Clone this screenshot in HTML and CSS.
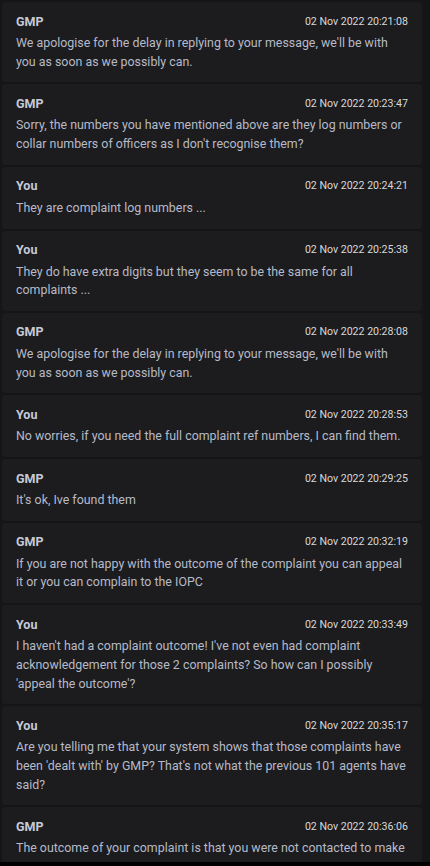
FILE: index.html
```html
<!DOCTYPE html>
<html lang="en">
<head>
    <meta charset="UTF-8">
    <meta name="viewport" content="width=device-width, initial-scale=1.0">
    <title>Messages - GMP</title>
    <link rel="stylesheet" href="styles.css">
</head>
<body>
    <div class="screen">
        <div class="thread">
            <div class="message">
                <div class="message-head"><span class="sender">GMP</span><span class="time">02 Nov 2022 20:21:08</span></div>
                <p class="message-text">We apologise for the delay in replying to your message, we'll be with you as soon as we possibly can.</p>
            </div>
            <div class="message">
                <div class="message-head"><span class="sender">GMP</span><span class="time">02 Nov 2022 20:23:47</span></div>
                <p class="message-text">Sorry, the numbers you have mentioned above are they log numbers or collar numbers of officers as I don't recognise them?</p>
            </div>
            <div class="message">
                <div class="message-head"><span class="sender">You</span><span class="time">02 Nov 2022 20:24:21</span></div>
                <p class="message-text">They are complaint log numbers ...</p>
            </div>
            <div class="message">
                <div class="message-head"><span class="sender">You</span><span class="time">02 Nov 2022 20:25:38</span></div>
                <p class="message-text">They do have extra digits but they seem to be the same for all complaints ...</p>
            </div>
            <div class="message">
                <div class="message-head"><span class="sender">GMP</span><span class="time">02 Nov 2022 20:28:08</span></div>
                <p class="message-text">We apologise for the delay in replying to your message, we'll be with you as soon as we possibly can.</p>
            </div>
            <div class="message">
                <div class="message-head"><span class="sender">You</span><span class="time">02 Nov 2022 20:28:53</span></div>
                <p class="message-text">No worries, if you need the full complaint ref numbers, I can find them.</p>
            </div>
            <div class="message">
                <div class="message-head"><span class="sender">GMP</span><span class="time">02 Nov 2022 20:29:25</span></div>
                <p class="message-text">It's ok, Ive found them</p>
            </div>
            <div class="message">
                <div class="message-head"><span class="sender">GMP</span><span class="time">02 Nov 2022 20:32:19</span></div>
                <p class="message-text">If you are not happy with the outcome of the complaint you can appeal it or you can complain to the IOPC</p>
            </div>
            <div class="message">
                <div class="message-head"><span class="sender">You</span><span class="time">02 Nov 2022 20:33:49</span></div>
                <p class="message-text">I haven't had a complaint outcome! I've not even had complaint acknowledgement for those 2 complaints? So how can I possibly 'appeal the outcome'?</p>
            </div>
            <div class="message">
                <div class="message-head"><span class="sender">You</span><span class="time">02 Nov 2022 20:35:17</span></div>
                <p class="message-text">Are you telling me that your system shows that those complaints have been 'dealt with' by GMP? That's not what the previous 101 agents have said?</p>
            </div>
            <div class="message">
                <div class="message-head"><span class="sender">GMP</span><span class="time">02 Nov 2022 20:36:06</span></div>
                <p class="message-text">The outcome of your complaint is that you were not contacted to make</p>
            </div>
        </div>
        <div class="nav-strip"></div>
    </div>
</body>
</html>
```

FILE: styles.css
```css
/* Base */
body, html {
    margin: 0;
    padding: 0;
    background: #151517;
    font-family: 'Roboto', 'Liberation Sans', sans-serif;
    color: #b6bac8;
}

.screen {
    display: flex;
    flex-direction: column;
    height: 866px;
    overflow: hidden;
}

/* Message list */
.thread {
    flex: 1;
    overflow: hidden;
    display: flex;
    flex-direction: column;
    gap: 2px;
    padding: 2px 8px 0 2px;
}

.message {
    flex-shrink: 0;
    background: #1c1c1e;
    border-radius: 3px;
    padding: 11px 14px;
}

.message-head {
    display: flex;
    justify-content: space-between;
    align-items: center;
    height: 16px;
    margin-bottom: 5px;
}

.sender {
    font-size: 12.5px;
    font-weight: bold;
    color: #c6cad8;
}

.time {
    font-size: 10.6px;
    color: #d8d8da;
}

.message-text {
    margin: 0;
    font-size: 12.4px;
    line-height: 18.7px;
    color: #b6bac8;
}

/* Bottom system strip */
.nav-strip {
    height: 4px;
    background: #000;
}
```
